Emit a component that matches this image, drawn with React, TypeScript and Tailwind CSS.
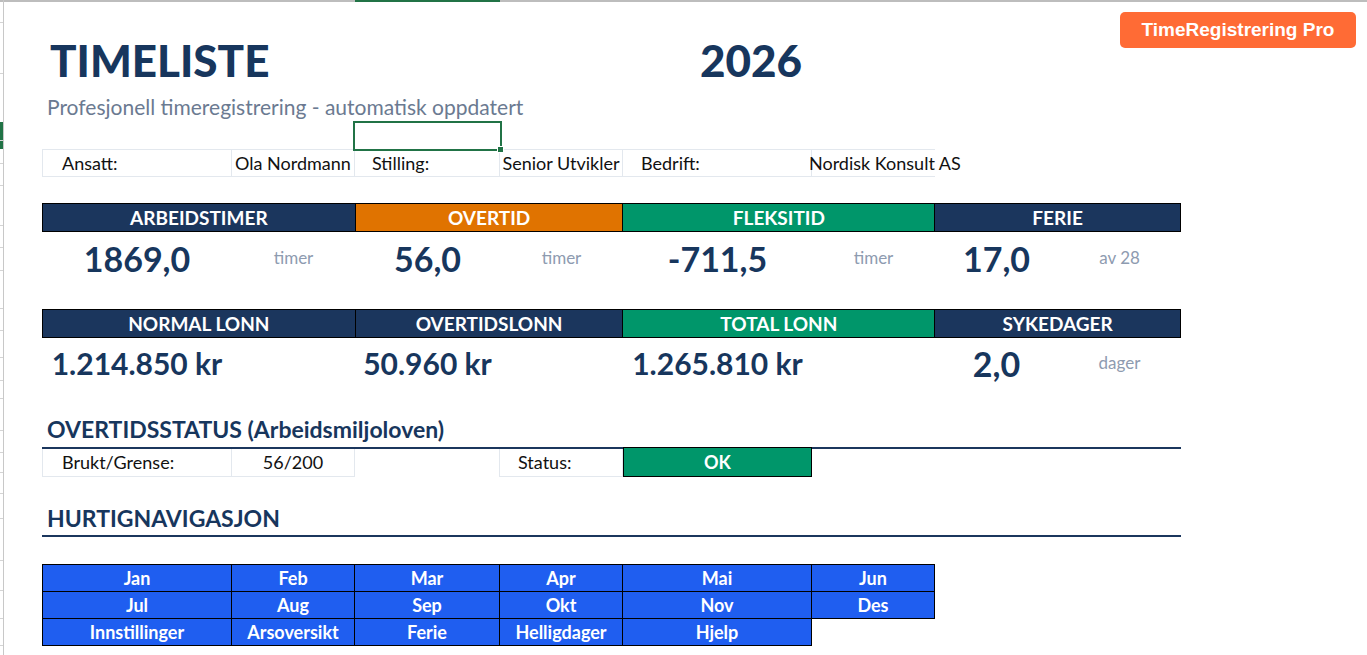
import React from "react";

const NAVY = "bg-[#1b365d]";

function HeaderCell({ w, color, children }: { w: string; color: string; children: React.ReactNode }) {
  return (
    <div className={`${w} ${color} h-[27px] border-r border-black flex items-center justify-center text-white font-bold text-[19px] leading-none`}>
      {children}
    </div>
  );
}

export default function App() {
  const nav1 = ["Jan", "Feb", "Mar", "Apr", "Mai", "Jun"];
  const nav2 = ["Jul", "Aug", "Sep", "Okt", "Nov", "Des"];
  const nav3 = ["Innstillinger", "Arsoversikt", "Ferie", "Helligdager", "Hjelp"];
  const widths = ["w-[190px]", "w-[123px]", "w-[145px]", "w-[123px]", "w-[189px]", "w-[123px]"];

  const NavRow = ({ items, top }: { items: string[]; top?: boolean }) => (
    <div className="flex">
      {items.map((t, i) => (
        <div
          key={t}
          className={`${widths[i]} bg-[#1f5ef0] border-b border-r border-black ${i === 0 ? "border-l" : ""} ${top ? "border-t h-[28px]" : "h-[27px]"} flex items-center justify-center text-white font-bold text-[18px] leading-none`}
        >
          {t}
        </div>
      ))}
    </div>
  );

  return (
    <div className="relative w-[1367px] h-[655px] bg-white overflow-hidden font-['Lato',sans-serif] text-[#17365d]">
      {/* sheet chrome */}
      <div className="absolute top-0 left-0 right-0 h-[2px] bg-[#bdbdbd]" />
      <div className="absolute top-0 left-[355px] w-[145px] h-[2px] bg-[#217346]" />
      <div className="absolute top-0 bottom-0 left-[3px] w-px bg-[#c8c8c8]" />
      <div className="absolute left-0 top-[122px] w-[3px] h-[27px] bg-[#217346]" />
      {[22, 73, 140, 163, 185, 225, 247, 270, 308, 330, 357, 380, 398, 430, 452, 472, 493, 518, 560, 590, 618, 645].map((y) => (
        <div key={y} className="absolute left-0 w-[3px] h-px bg-[#d4d4d4]" style={{ top: y }} />
      ))}

      {/* badge */}
      <div className="absolute left-[1120px] top-[12px] w-[236px] h-[36px] rounded-[5px] bg-[#ff6b35] flex items-center justify-center text-white font-bold text-[19px] font-['Liberation_Sans',Arial,sans-serif]">
        TimeRegistrering Pro
      </div>

      {/* selected cell */}
      <div className="absolute left-[353px] top-[121px] w-[149px] h-[30px] border-2 border-[#217346] z-10">
        <div className="absolute -right-[4px] -bottom-[4px] w-[7px] h-[7px] bg-[#217346] border border-white" />
      </div>

      <div className="pl-[42px] pt-[30px]">
        {/* Title */}
        <div className="flex items-end h-[52px]">
          <div className="w-[658px] pl-[8px] text-[44px] font-black leading-none">TIMELISTE</div>
          <div className="text-[44px] font-black leading-none">2026</div>
        </div>
        <div className="pl-[5px] mt-[12px] h-[26px] text-[21px] text-[#6b7a91] leading-[26px]">
          Profesjonell timeregistrering - automatisk oppdatert
        </div>

        {/* info row */}
        <div className="mt-[29px] flex h-[28px] text-[18px] text-[#111] border-t border-b border-[#e3e8ee] w-[893px]">
          <div className="w-[190px] border-l border-r border-[#e3e8ee] pl-[19px] flex items-center">Ansatt:</div>
          <div className="w-[123px] border-r border-[#e3e8ee] flex items-center justify-center whitespace-nowrap">Ola Nordmann</div>
          <div className="w-[145px] border-r border-[#e3e8ee] pl-[17px] flex items-center">Stilling:</div>
          <div className="w-[123px] border-r border-[#e3e8ee] flex items-center justify-center whitespace-nowrap">Senior Utvikler</div>
          <div className="w-[189px] border-r border-[#e3e8ee] pl-[18px] flex items-center">Bedrift:</div>
          <div className="w-[123px] flex items-center whitespace-nowrap">
            <span className="relative -left-[3px]">Nordisk Konsult AS</span>
          </div>
        </div>

        {/* headers 1 */}
        <div className="mt-[26px] flex w-[1139px] border border-black border-r-0">
          <HeaderCell w="w-[313px]" color={NAVY}>ARBEIDSTIMER</HeaderCell>
          <HeaderCell w="w-[268px]" color="bg-[#e07300]">OVERTID</HeaderCell>
          <HeaderCell w="w-[312px]" color="bg-[#00966a]">FLEKSITID</HeaderCell>
          <HeaderCell w="w-[246px]" color={NAVY}>FERIE</HeaderCell>
        </div>
        <div className="flex h-[52px] items-center">
          <div className="w-[190px] text-center text-[34px] font-bold">1869,0</div>
          <div className="w-[123px] text-center text-[17px] text-[#8e9bb0]">timer</div>
          <div className="w-[145px] text-center text-[34px] font-bold">56,0</div>
          <div className="w-[123px] text-center text-[17px] text-[#8e9bb0]">timer</div>
          <div className="w-[189px] text-center text-[34px] font-bold">-711,5</div>
          <div className="w-[123px] text-center text-[17px] text-[#8e9bb0]">timer</div>
          <div className="w-[123px] text-center text-[34px] font-bold">17,0</div>
          <div className="w-[123px] text-center text-[17px] text-[#8e9bb0]">av 28</div>
        </div>

        {/* headers 2 */}
        <div className="mt-[25px] flex w-[1139px] border border-black border-r-0">
          <HeaderCell w="w-[313px]" color={NAVY}>NORMAL LONN</HeaderCell>
          <HeaderCell w="w-[268px]" color={NAVY}>OVERTIDSLONN</HeaderCell>
          <HeaderCell w="w-[312px]" color="bg-[#00966a]">TOTAL LONN</HeaderCell>
          <HeaderCell w="w-[246px]" color={NAVY}>SYKEDAGER</HeaderCell>
        </div>
        <div className="flex h-[50px] items-center">
          <div className="w-[190px] text-center text-[30px] font-bold whitespace-nowrap">1.214.850 kr</div>
          <div className="w-[123px]" />
          <div className="w-[145px] text-center text-[30px] font-bold whitespace-nowrap">50.960 kr</div>
          <div className="w-[123px]" />
          <div className="w-[189px] text-center text-[30px] font-bold whitespace-nowrap">1.265.810 kr</div>
          <div className="w-[123px]" />
          <div className="w-[123px] text-center text-[34px] font-bold">2,0</div>
          <div className="w-[123px] text-center text-[17px] text-[#8e9bb0]">dager</div>
        </div>

        {/* overtidsstatus */}
        <div className="mt-[30px] w-[1139px] border-b-2 border-[#1b365d] pl-[5px] h-[31px] flex items-end pb-[6px] text-[23px] font-bold leading-none">
          OVERTIDSSTATUS (Arbeidsmiljoloven)
        </div>
        <div className="flex h-[28px] text-[18px] text-[#111]">
          <div className="w-[190px] border-l border-r border-b border-[#e3e8ee] pl-[19px] flex items-center">Brukt/Grense:</div>
          <div className="w-[123px] border-r border-b border-[#e3e8ee] flex items-center justify-center">56/200</div>
          <div className="w-[145px] border-r border-[#e3e8ee]" />
          <div className="w-[123px] border-r border-b border-[#e3e8ee] pl-[18px] flex items-center">Status:</div>
          <div className="w-[189px] -mt-[2px] h-[30px] bg-[#00966a] border border-black flex items-center justify-center text-white font-bold text-[18px]">OK</div>
        </div>

        {/* hurtignavigasjon */}
        <div className="mt-[30px] w-[1139px] border-b-2 border-[#1b365d] pl-[5px] h-[30px] flex items-end pb-[5px] text-[23px] font-bold leading-none">
          HURTIGNAVIGASJON
        </div>
        <div className="mt-[27px]">
          <NavRow items={nav1} top />
          <NavRow items={nav2} />
          <NavRow items={nav3} />
        </div>
      </div>
    </div>
  );
}
